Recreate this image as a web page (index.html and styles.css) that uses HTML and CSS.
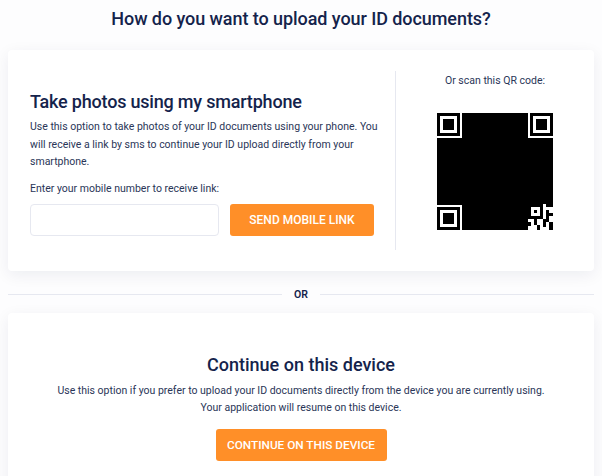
FILE: index.html
```html
<!DOCTYPE html>
<html lang="en">
<head>
<meta charset="utf-8">
<title>Upload ID documents</title>
<link rel="stylesheet" href="styles.css">
</head>
<body>
<h1 class="page-title">How do you want to upload your ID documents?</h1>
<section class="card card-phone">
  <div class="phone-main">
    <h2 class="phone-title">Take photos using my smartphone</h2>
    <p class="text">Use this option to take photos of your ID documents using your phone. You will receive a link by sms to continue your ID upload directly from your smartphone.</p>
    <label class="text field-label" for="mobile">Enter your mobile number to receive link:</label>
    <div class="send-row">
      <input class="mobile-input" id="mobile" type="text">
      <button class="btn btn-send" type="button">SEND MOBILE LINK</button>
    </div>
  </div>
  <div class="qr-side">
    <p class="text qr-label">Or scan this QR code:</p>
    <svg class="qr" viewBox="0 0 116 117" shape-rendering="crispEdges" aria-hidden="true">
      <rect width="116" height="117" fill="#000"/>
      <g fill="#fff">
        <rect x="0" y="0" width="25" height="25"/><rect x="91" y="0" width="25" height="25"/><rect x="0" y="92" width="25" height="25"/>
        <rect x="91" y="91" width="25" height="26"/>
      </g>
      <g fill="#000">
        <rect x="0" y="0" width="23" height="23"/><rect x="93" y="0" width="23" height="23"/><rect x="0" y="94" width="23" height="23"/>
      </g>
      <g fill="#fff">
        <rect x="3" y="3" width="17" height="17"/><rect x="96" y="3" width="17" height="17"/><rect x="3" y="97" width="17" height="17"/>
      </g>
      <g fill="#000">
        <rect x="6" y="6" width="11" height="11"/><rect x="99" y="6" width="11" height="11"/><rect x="6" y="100" width="11" height="11"/>
        <rect x="91" y="91" width="3" height="15"/><rect x="91" y="91" width="15" height="3"/><rect x="103" y="91" width="3" height="15"/><rect x="91" y="103" width="15" height="3"/>
        <rect x="97" y="97" width="3" height="3"/>
        <rect x="109" y="91" width="7" height="3"/><rect x="109" y="97" width="3" height="12"/><rect x="109" y="100" width="7" height="3"/>
        <rect x="91" y="109" width="3" height="4"/><rect x="97" y="106" width="3" height="6"/><rect x="100" y="112" width="3" height="5"/><rect x="106" y="106" width="3" height="8"/><rect x="112" y="109" width="4" height="8"/>
      </g>
    </svg>
  </div>
</section>
<div class="divider"><span class="divider-text">OR</span></div>
<section class="card card-device">
  <h2 class="device-title">Continue on this device</h2>
  <p class="text device-text">Use this option if you prefer to upload your ID documents directly from the device you are currently using.<br>Your application will resume on this device.</p>
  <button class="btn btn-device" type="button">CONTINUE ON THIS DEVICE</button>
</section>
</body>
</html>
```
FILE: styles.css
```css
html, body { margin: 0; padding: 0; }
html { height: 476px; overflow: hidden; }
body {
  background: #fdfdfe;
  color: #14234b;
  font-family: Roboto, "Noto Sans", sans-serif;
  padding: 0 8px;
}
.page-title {
  margin: 0;
  padding: 5px 0 18px;
  height: 27px;
  font-size: 18px;
  line-height: 27px;
  font-weight: 500;
  letter-spacing: -0.07px;
  text-align: center;
}
.card {
  background: #fff;
  border-radius: 4px;
  box-shadow: 0 4px 16px rgba(20, 35, 75, 0.07);
}
.card-phone {
  display: flex;
  height: 221px;
  padding: 21px 0 21px 22px;
  box-sizing: border-box;
}
.phone-main {
  width: 365px;
  padding-top: 19px;
  padding-right: 15px;
  box-sizing: border-box;
}
.phone-title {
  margin: 0 0 4px;
  font-size: 18px;
  line-height: 24px;
  font-weight: 500;
  letter-spacing: -0.2px;
}
.text {
  margin: 0;
  font-size: 10.5px;
  line-height: 17.5px;
  color: #2a3658;
}
.field-label { display: block; margin-top: 9px; }
.send-row { display: flex; gap: 11px; margin-top: 7px; }
.mobile-input {
  width: 189px;
  height: 32px;
  box-sizing: border-box;
  border: 1px solid #e6e8f0;
  border-radius: 4px;
  background: #fff;
  outline: none;
}
.btn {
  border: 0;
  border-radius: 3px;
  background: #ff8f28;
  color: #fff;
  font-family: inherit;
  font-weight: 500;
  font-size: 12px;
  cursor: pointer;
}
.btn-send { width: 144px; height: 32px; }
.qr-side {
  flex: 1;
  border-left: 1px solid #e6e8f0;
  padding-top: 1px;
  display: flex;
  flex-direction: column;
  align-items: center;
}
.qr-label { margin-bottom: 23px; }
.qr { display: block; width: 116px; height: 117px; }
.divider {
  display: flex;
  align-items: center;
  gap: 12px;
  height: 42px;
  padding-top: 4px;
  box-sizing: border-box;
  font-size: 10.5px;
  font-weight: 600;
}
.divider::before, .divider::after {
  content: "";
  flex: 1;
  height: 1px;
  background: #e6e8f0;
}
.card-device {
  height: 200px;
  padding-top: 39px;
  box-sizing: border-box;
  text-align: center;
}
.device-title {
  margin: 0 0 3.5px;
  font-size: 18px;
  line-height: 26px;
  font-weight: 500;
}
.device-text { margin-bottom: 12.5px; }
.btn-device { width: 171px; height: 32px; font-size: 11.8px; }
```
